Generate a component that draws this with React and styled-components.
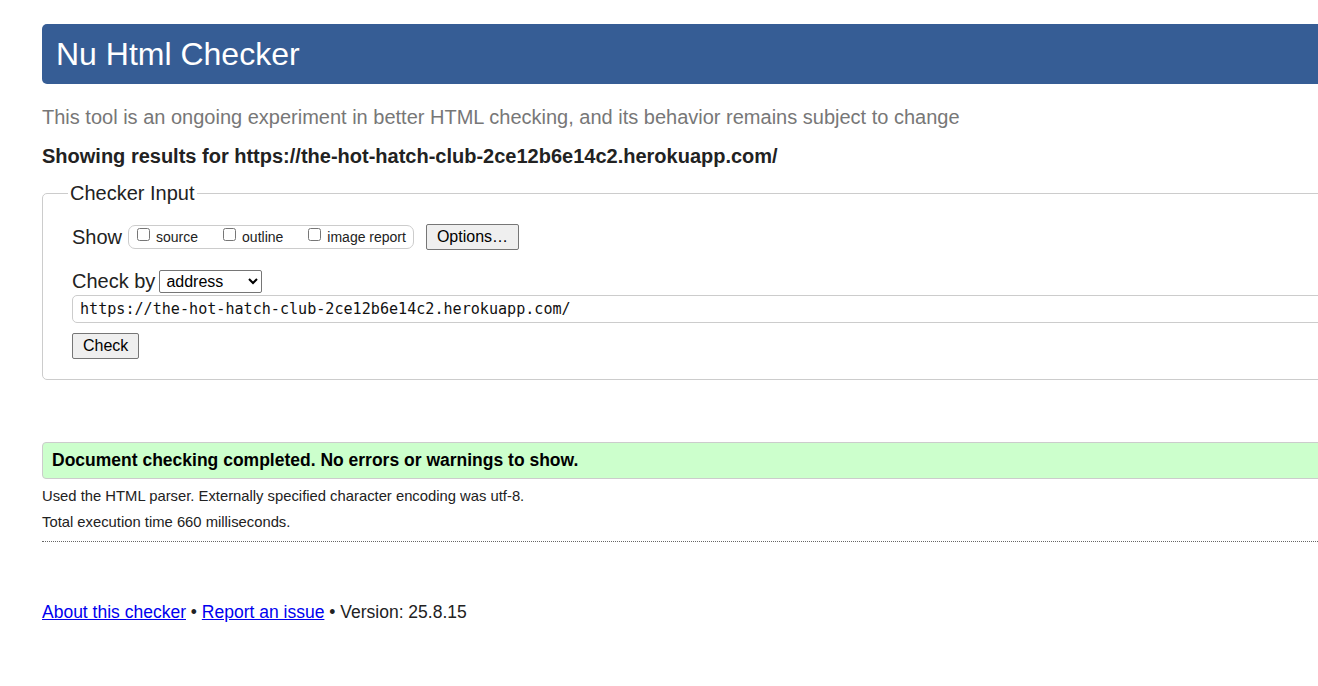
import React from "react";
import styled, { createGlobalStyle } from "styled-components";

const Global = createGlobalStyle`
  html, body { margin: 0; padding: 0; background: #fff; overflow: hidden; }
  body { font-family: "Liberation Sans", Arial, sans-serif; color: #222; }
`;

const Page = styled.div`
  width: 1420px;
  padding: 24px 0 40px 42px;
  box-sizing: border-box;
`;

const Header = styled.h1`
  margin: 0;
  height: 60px;
  display: flex;
  align-items: center;
  padding-left: 14px;
  background: #365d95;
  color: #fff;
  font-weight: normal;
  font-size: 32px;
  border-radius: 5px;
`;

const Tagline = styled.p`
  margin: 22px 0 0;
  font-size: 20px;
  line-height: 23px;
  color: #777;
`;

const Showing = styled.p`
  margin: 16px 0 0;
  font-size: 20px;
  line-height: 23px;
  font-weight: bold;
  color: #222;
`;

const Fieldset = styled.fieldset`
  margin: 14px 0 0;
  padding: 19px 0 20px 29px;
  border: 1px solid #ccc;
  border-radius: 5px;
`;

const Legend = styled.legend`
  font-size: 20px;
  padding: 0 2px;
  margin-left: -4px;
  color: #222;
`;

const Row = styled.div`
  display: flex;
  align-items: center;
  gap: ${(p) => p.$gap || 0}px;
  margin-top: ${(p) => p.$mt || 0}px;
`;

const Label = styled.span`
  font-size: 20px;
  color: #222;
  margin-right: ${(p) => p.$mr || 0}px;
`;

const CheckGroup = styled.div`
  display: flex;
  align-items: center;
  height: 22px;
  padding: 0 7px 0 8px;
  border: 1px solid #ccc;
  border-radius: 7px;
  gap: 25px;
`;

const CheckItem = styled.label`
  display: flex;
  align-items: center;
  font-size: 14px;
  color: #222;
`;

const Box = styled.input`
  width: 13px;
  height: 13px;
  margin: -6px 6px 0 0;
`;

const Button = styled.button`
  font-family: "Liberation Sans", Arial, sans-serif;
  font-size: 16px;
  height: 26px;
  padding: 0 10px;
  background: #efefef;
  border: 1px solid #767676;
  border-radius: 2px;
  color: #000;
  margin-left: ${(p) => p.$ml || 0}px;
`;

const Select = styled.select`
  font-family: "Liberation Sans", Arial, sans-serif;
  font-size: 16px;
  width: 103px;
  height: 23px;
  border: 1px solid #767676;
  border-radius: 2px;
  background: #fff;
  color: #000;
  padding: 0 2px;
  margin-left: 4px;
`;

const UrlInput = styled.input`
  display: block;
  margin-top: 2px;
  width: 1320px;
  height: 28px;
  box-sizing: border-box;
  padding: 0 7px;
  font-family: "DejaVu Sans Mono", "Liberation Mono", monospace;
  font-size: 15.1px;
  color: #111;
  border: 1px solid #ccc;
  border-radius: 5px;
`;

const Success = styled.div`
  margin-top: 62px;
  height: 37px;
  box-sizing: border-box;
  display: flex;
  align-items: center;
  padding-left: 9px;
  background: #ccffcc;
  border: 1px solid #ccc;
  border-radius: 4px;
  font-size: 17.5px;
  font-weight: bold;
  color: #000;
`;

const Detail = styled.p`
  margin: ${(p) => p.$mt}px 0 0;
  font-size: 14.8px;
  line-height: 16px;
  color: #222;
`;

const Divider = styled.hr`
  margin: 11px 0 0;
  border: 0;
  border-top: 1px dotted #666;
  height: 0;
`;

const Footer = styled.p`
  margin: 60px 0 0;
  font-size: 17.5px;
  line-height: 20px;
  color: #222;
`;

const Link = styled.a`
  color: #0000ee;
  text-decoration: underline;
`;

export default function App() {
  return (
    <>
      <Global />
      <Page>
        <Header>Nu Html Checker</Header>
        <Tagline>
          This tool is an ongoing experiment in better HTML checking, and its behavior remains subject to change
        </Tagline>
        <Showing>Showing results for https://the-hot-hatch-club-2ce12b6e14c2.herokuapp.com/</Showing>
        <Fieldset>
          <Legend>Checker Input</Legend>
          <Row>
            <Label $mr={6}>Show</Label>
            <CheckGroup>
              <CheckItem><Box type="checkbox" />source</CheckItem>
              <CheckItem><Box type="checkbox" />outline</CheckItem>
              <CheckItem><Box type="checkbox" />image report</CheckItem>
            </CheckGroup>
            <Button $ml={12}>Options…</Button>
          </Row>
          <Row $mt={20}>
            <Label>Check by</Label>
            <Select defaultValue="address">
              <option value="address">address</option>
              <option value="file">file upload</option>
              <option value="text">text input</option>
            </Select>
          </Row>
          <UrlInput defaultValue="https://the-hot-hatch-club-2ce12b6e14c2.herokuapp.com/" />
          <Row $mt={10}>
            <Button>Check</Button>
          </Row>
        </Fieldset>
        <Success>Document checking completed. No errors or warnings to show.</Success>
        <Detail $mt={9}>Used the HTML parser. Externally specified character encoding was utf-8.</Detail>
        <Detail $mt={10}>Total execution time 660 milliseconds.</Detail>
        <Divider />
        <Footer>
          <Link href="#">About this checker</Link> • <Link href="#">Report an issue</Link> • Version: 25.8.15
        </Footer>
      </Page>
    </>
  );
}
